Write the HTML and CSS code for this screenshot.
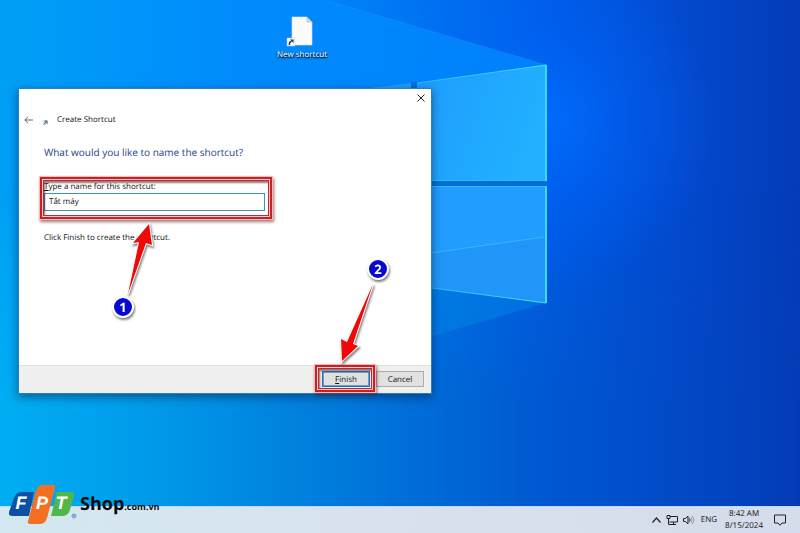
FILE: index.html
```
<!DOCTYPE html>
<html lang="en">
<head>
	<meta charset="utf-8">
	<meta name="viewport" content="width=device-width, initial-scale=1">
	<title>Create Shortcut</title>
	<link rel="stylesheet" href="styles.css">
</head>
<body>
	<svg class="wallpaper" viewBox="0 0 800 533" preserveAspectRatio="none" aria-hidden="true">
		<defs>
			<linearGradient id="sky" x1="0" y1="0" x2="1" y2="0">
				<stop offset="0" stop-color="#00a0f5"/>
				<stop offset=".2" stop-color="#0092fb"/>
				<stop offset=".4" stop-color="#0084fa"/>
				<stop offset=".55" stop-color="#0070f0"/>
				<stop offset=".7" stop-color="#0059e4"/>
				<stop offset=".85" stop-color="#0349cf"/>
				<stop offset="1" stop-color="#043cb7"/>
			</linearGradient>
			<radialGradient id="glow" gradientUnits="userSpaceOnUse" cx="545" cy="120" r="170">
				<stop offset="0" stop-color="#0070ff" stop-opacity=".8"/>
				<stop offset=".5" stop-color="#0068ff" stop-opacity=".35"/>
				<stop offset="1" stop-color="#0068ff" stop-opacity="0"/>
			</radialGradient>
			<linearGradient id="floor" x1="0" y1="0" x2="1" y2="0">
				<stop offset="0" stop-color="#00aef3"/>
				<stop offset=".18" stop-color="#009bea"/>
				<stop offset=".4" stop-color="#007ddc"/>
				<stop offset=".65" stop-color="#005acc" stop-opacity=".8"/>
				<stop offset="1" stop-color="#043cb4" stop-opacity=".3"/>
			</linearGradient>
			<linearGradient id="fade" x1="0" y1="0" x2="0" y2="1">
				<stop offset=".35" stop-color="#fff" stop-opacity="0"/>
				<stop offset=".75" stop-color="#fff"/>
			</linearGradient>
			<mask id="lower"><rect width="800" height="533" fill="url(#fade)"/></mask>
			<linearGradient id="beam" x1="0" y1="0" x2="1" y2="0">
				<stop offset=".3" stop-color="#008dff" stop-opacity="0"/>
				<stop offset=".7" stop-color="#008dff" stop-opacity=".7"/>
			</linearGradient>
			<linearGradient id="pane" x1="0" y1="0" x2="1" y2=".3">
				<stop offset="0" stop-color="#1e9cfd"/>
				<stop offset="1" stop-color="#22b0ff"/>
			</linearGradient>
			<linearGradient id="edge" x1="0" y1="0" x2="1" y2="0">
				<stop offset="0" stop-color="#2db4fb"/>
				<stop offset="1" stop-color="#45dcff"/>
			</linearGradient>
		</defs>
		<rect width="800" height="533" fill="url(#sky)"/>
		<rect width="800" height="533" fill="url(#floor)" mask="url(#lower)"/>
		<rect x="375" width="340" height="300" fill="url(#glow)"/>
		<path d="M0 0H325L546 65L416 84L0 150Z" fill="url(#beam)"/>
		<path d="M325 0L546 65" stroke="#2196ff" opacity=".4"/>
		<path d="M416 286L546 303L430 337L300 380V286Z" fill="#0086e4" opacity=".5"/>
		<path d="M370 88L411 83V180H370Z" fill="#1d9ff5"/>
		<path d="M411 82H417V300H411Z M417 181H547V186H417Z" fill="#0070d8"/>
		<path d="M417 83L546 65V181H417Z" fill="url(#pane)"/>
		<path d="M417 186H546V303L417 286Z" fill="#219dff"/>
		<path d="M417 255L546 237V303L417 286Z" fill="#2196f8"/>
		<path d="M417 255L544 237" stroke="#31b9ff" fill="none"/>
		<path d="M417 83L546 65 M417 286L546 303" stroke="url(#edge)" fill="none"/>
		<path d="M417 180.500H546 M417 186.500H546" stroke="#36b6fb" fill="none"/>
		<path d="M546 65V181 M546 186V303" stroke="#41d6ff" stroke-width="2" fill="none"/>
	</svg>

	<main class="desktop">
		<a class="desktop-icon" href="#">
			<svg width="28" height="32" viewBox="0 0 28 32" aria-hidden="true">
				<path d="M6 1H21L26 6V29H6Z" fill="#fbfbfb" stroke="#d8e4ee" stroke-width=".6"/>
				<path d="M21 1V6H26Z" fill="#d5dde4" stroke="#9bb4c8" stroke-width=".6"/>
				<rect x="1" y="22" width="8" height="8" fill="#f4f8fb" stroke="#b9cbd8" stroke-width=".5"/>
				<path d="M3.500 29C3 26.500 4 25.500 5.500 25.500" fill="none" stroke="#17365c" stroke-width="1.500"/>
				<path d="M4 23.500H7.500V27Z" fill="#17365c"/>
			</svg>
			<span>New shortcut</span>
		</a>

		<form class="dialog">
			<div class="titlebar">
				<button type="button" class="icon-button" aria-label="Close">
					<svg width="8" height="8" viewBox="0 0 8 8"><path d="M.5 .5L7.500 7.500M7.500 .5L.5 7.500" stroke="#222" fill="none"/></svg>
				</button>
			</div>
			<div class="nav">
				<button type="button" class="icon-button" aria-label="Back">
					<svg width="9" height="8" viewBox="0 0 9 8"><path d="M9 4H1M4 .7L.8 4L4 7.300" stroke="#666" fill="none"/></svg>
				</button>
				<svg class="nav-icon" width="5" height="5" viewBox="0 0 5 5" aria-hidden="true">
					<rect width="5" height="5" fill="#dde5ec"/>
					<path d="M1 4.500L3.500 1.500M1.500 1H4V3.500" stroke="#3c5878" fill="none"/>
				</svg>
				<span>Create Shortcut</span>
			</div>
			<div class="content">
				<h1>What would you like to name the shortcut?</h1>
				<div class="field marked">
					<label for="name"><u>T</u>ype a name for this shortcut:</label>
					<input id="name" type="text" value="Tắt máy">
				</div>
				<p>Click Finish to create the shortcut.</p>
			</div>
			<div class="actions">
				<span class="marked"><button type="button" class="primary"><u>F</u>inish</button></span>
				<button type="button">Cancel</button>
			</div>

			<!-- numbered steps drawn over the dialog -->
			<svg class="steps" width="414" height="306" viewBox="18 88 414 306" aria-hidden="true">
				<g class="arrow">
					<path d="M128 294L139 242L133 243L149 224L152 245L146 243Z"/>
					<path d="M373 284L347 342L341 339L342 361L358 346L353 344Z"/>
				</g>
				<g class="badge">
					<circle cx="123" cy="307" r="10"/>
					<circle cx="378" cy="269" r="10"/>
				</g>
				<text x="123" y="312">1</text>
				<text x="378" y="274">2</text>
			</svg>
		</form>
	</main>

	<footer class="taskbar">
		<button type="button" class="icon-button" aria-label="Show hidden icons">
			<svg width="9" height="6" viewBox="0 0 9 6"><path d="M.5 5.500L4.500 1L8.500 5.500" stroke="#222" fill="none" stroke-width="1.200"/></svg>
		</button>
		<button type="button" class="icon-button" aria-label="Network">
			<svg width="12" height="10" viewBox="0 0 12 10"><path d="M4 1.500H11.500V7H3.500M7.500 7V9.500M5 9.500H10M1 .5H4V3.500H1ZM2.500 3.500V9.500H5" stroke="#222" fill="none"/></svg>
		</button>
		<button type="button" class="icon-button" aria-label="Volume">
			<svg width="12" height="10" viewBox="0 0 12 10"><path d="M.5 3.500H2.500L5 1V9L2.500 6.500H.5Z M6.500 3.500Q7.500 5 6.500 6.500" stroke="#222" fill="none"/><path d="M8 2Q10 5 8 8M9.500 .8Q12.500 5 9.500 9.200" stroke="#999fa8" fill="none"/></svg>
		</button>
		<span class="lang">ENG</span>
		<div class="clock"><time>8:42 AM</time><time>8/15/2024</time></div>
		<button type="button" class="icon-button" aria-label="Notifications">
			<svg width="12" height="12" viewBox="0 0 12 12"><path d="M.5 1H11.500V9H8L6 11.300L4 9H.5Z" stroke="#222" fill="none"/></svg>
		</button>
	</footer>

	<a class="brand" href="#" aria-label="FPT Shop">
		<svg width="68" height="42" viewBox="0 0 68 42">
			<path d="M5 14Q7 8 13 8H25L20 32H3Q-1 32 0 28Z" fill="#0c50a4"/>
			<path d="M48 8H62Q66 8 65 12L61 26Q59 32 53 32H42Z" fill="#50b748"/>
			<path d="M33 1H44Q47 1 46 4L38 34Q36 40 31 40H21Q18 40 19 37L27 7Q29 1 33 1Z" fill="#f37023"/>
			<text x="12" y="25">F</text>
			<text x="33" y="25">P</text>
			<text x="52" y="25">T</text>
			<circle cx="65" cy="32" r="2" fill="none" stroke="#3d74b5" stroke-width=".7"/>
			<path d="M64.500 33V31H65.500V32L66 33" fill="none" stroke="#3d74b5" stroke-width=".5"/>
		</svg>
		<span class="brand-name">Shop<small>.com.vn</small></span>
	</a>
</body>
</html>
```
FILE: styles.css
```
* {
	box-sizing: border-box;
}

body {
	position: relative;
	display: flex;
	flex-direction: column;
	min-height: 100vh;
	margin: 0;
	overflow: hidden;
	background: #0078e0;
	color: #111;
	font: 8px/12px "Open Sans", "Noto Sans", sans-serif;
	text-rendering: geometricPrecision;
}

button,
input {
	font: inherit;
	color: inherit;
	text-rendering: inherit;
}

svg {
	display: block;
}

.wallpaper {
	position: absolute;
	inset: 0;
	width: 100%;
	height: 100%;
}

.desktop {
	position: relative;
	flex: 1;
}

.desktop-icon {
	position: absolute;
	left: 272px;
	top: 16px;
	display: flex;
	flex-direction: column;
	align-items: center;
	gap: 1px;
	width: 60px;
	color: #fff;
	text-decoration: none;
	text-shadow: 0 1px 2px #000, 1px 1px 1px #002b55;
	white-space: nowrap;
}

.desktop-icon svg {
	margin-right: 4px;
}

/* dialog */
.dialog {
	position: absolute;
	left: 18px;
	top: 88px;
	display: flex;
	flex-direction: column;
	width: 414px;
	min-height: 306px;
	background: #fff;
	border: 1px solid #2a7fc0;
	box-shadow: 0 3px 9px rgba(0, 20, 60, .5);
}

.icon-button {
	padding: 0;
	border: 0;
	background: none;
}

.titlebar {
	display: flex;
	justify-content: flex-end;
	padding: 5px 6px;
}

.nav {
	display: flex;
	align-items: center;
	gap: 9px;
	padding: 7px 5px 6px;
}

.nav-icon {
	margin-top: 5px;
	margin-left: 1px;
}

.content {
	flex: 1;
	padding: 12px 25px;
}

h1 {
	margin: 0 0 21px;
	color: #1c4587;
	font-size: 10px;
	line-height: 16px;
	font-weight: 400;
}

.field {
	display: flex;
	flex-direction: column;
	width: 221px;
}

.field input {
	height: 18px;
	padding: 0 4px 2px;
	border: 1px solid #3f8fc4;
	border-radius: 0;
	outline: 0;
	background: #fff;
}

.content p {
	margin: 21px 0 0;
}

.actions {
	display: flex;
	justify-content: flex-end;
	gap: 6px;
	padding: 5px 7px 6px;
	background: #f0f0f0;
	border-top: 1px solid #dfdfdf;
}

.actions button {
	display: block;
	width: 48px;
	height: 16px;
	padding: 1px 0 0;
	background: #e1e1e1;
	border: 1px solid #adadad;
	line-height: 13px;
}

.actions .primary {
	border: 1px solid #2470b8;
	outline: 1px solid #6c9cc8;
	outline-offset: -2px;
}

/* red double frame round the marked controls */
.marked {
	position: relative;
}

.marked::after {
	content: "";
	position: absolute;
	inset: -4px -7px -8px -4px;
	border: 2px solid #cc1f24;
	outline: 1px solid #f0bcbc;
	box-shadow: 1px 2px 3px 1px rgba(90, 30, 30, .6), inset 0 0 0 1px #f6cfcf, inset 0 0 0 2px #c4282c, inset 1px 2px 2px 2px rgba(70, 30, 30, .6);
	pointer-events: none;
}

.actions .marked::after {
	inset: -6px -5px -5px -7px;
}

.steps {
	position: absolute;
	left: -1px;
	top: -1px;
	pointer-events: none;
	filter: drop-shadow(1px 2px 1px rgba(0, 0, 0, .5));
}

.arrow path {
	fill: #f00808;
	stroke: #fff;
	stroke-width: 2px;
	paint-order: stroke;
}

.badge circle {
	fill: #0808cf;
	stroke: #fff;
	stroke-width: 2px;
}

.steps text {
	fill: #fff;
	font: 700 13px "Open Sans", sans-serif;
	text-anchor: middle;
}

/* taskbar */
.taskbar {
	position: relative;
	display: flex;
	align-items: center;
	justify-content: flex-end;
	gap: 5px;
	height: 27px;
	padding-right: 14px;
	background: linear-gradient(90deg, #d3e8f0, #d8e3ef 40%, #d5dceb);
	border-top: 1px solid #c3d8ec;
}

.lang {
	margin-left: 1px;
}

.clock {
	display: flex;
	flex-direction: column;
	align-items: center;
	margin: 0 6px 0 3px;
}

.brand {
	position: absolute;
	left: 9px;
	bottom: 7px;
	display: flex;
	align-items: center;
	gap: 3px;
	color: #0a0a0a;
	text-decoration: none;
}

.brand text {
	fill: #fff;
	font: italic 700 18px "Liberation Sans", sans-serif;
	text-anchor: middle;
}

.brand-name {
	font: 700 18px/24px "Open Sans", sans-serif;
}

.brand-name small {
	font-size: 9px;
}
```
